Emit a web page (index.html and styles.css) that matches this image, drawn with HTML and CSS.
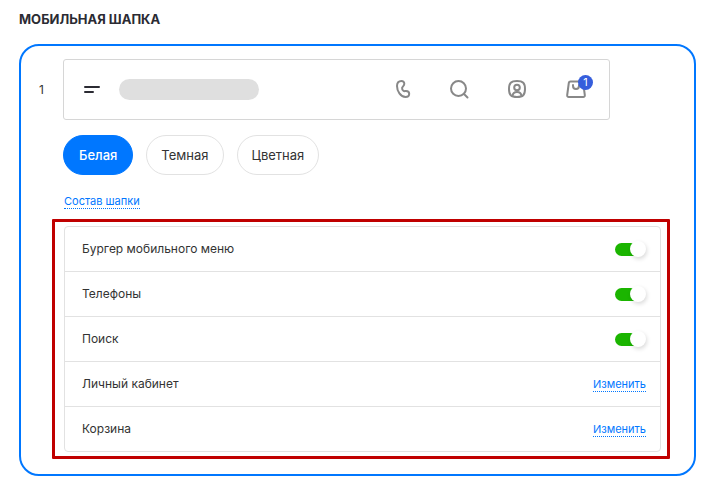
FILE: index.html
```html
<!doctype html>
<html lang="ru">
<head>
<meta charset="UTF-8" />
<title>Мобильная шапка</title>
<link rel="stylesheet" href="styles.css">
</head>
<body>
	<h1>МОБИЛЬНАЯ ШАПКА</h1>
	<div id="card">
		<div class="number">1</div>
		<div class="content">
			<div class="preview">
				<svg class="burger" width="16" height="8" viewBox="0 0 16 8"><path d="M1 1h14M1 6h8" fill="none" stroke="#2b2b33" stroke-width="2" stroke-linecap="round"/></svg>
				<div class="logo"></div>
				<div class="icons">
					<svg class="icon" viewBox="0 0 24 24"><path d="M11.500 3C8.500 3 7 5.300 7 8c0 5 3.600 11 8.500 11 2.300 0 3.700-1.400 3.700-3.200S17.800 13 16 13c-1.300 0-1.700.5-2.600-.2-.9-.7-1.400-2-1.300-3 .1-1.100 2.200-1.600 2.200-4C14.300 4.200 13.100 3 11.500 3z"/></svg>
					<svg class="icon" viewBox="0 0 24 24"><circle cx="10.500" cy="10.500" r="7.500"/><path d="M16 16l3.500 3.500"/></svg>
					<svg class="icon" viewBox="0 0 24 24"><path d="M11 3c-6 0-8 2-8 8s2 8 8 8 8-2 8-8-2-8-8-8z"/><circle cx="11" cy="9.500" r="2.800"/><path d="M6.500 18c.3-2.800 1.500-4 4.500-4s4.200 1.200 4.500 4"/></svg>
					<div class="basket">
						<svg class="icon" viewBox="0 0 24 24"><path d="M6.500 3.500h11q1.500 0 1.700 1.500l1.600 12q.2 2-1.600 2H4.800q-1.800 0-1.600-2L4.800 5Q5 3.500 6.500 3.500z"/><path d="M9 7v.7c0 4.400 6 4.400 6 0V7"/></svg>
						<span class="count">1</span>
					</div>
				</div>
			</div>
			<div class="colors">
				<button type="button" class="active">Белая</button>
				<button type="button">Темная</button>
				<button type="button">Цветная</button>
			</div>
			<a href="#" class="link">Состав шапки</a>
			<div class="frame">
				<ul class="options">
					<li><label for="burger">Бургер мобильного меню</label><input type="checkbox" id="burger" class="switch" checked /></li>
					<li><label for="phones">Телефоны</label><input type="checkbox" id="phones" class="switch" checked /></li>
					<li><label for="search">Поиск</label><input type="checkbox" id="search" class="switch" checked /></li>
					<li><span>Личный кабинет</span><a href="#" class="link">Изменить</a></li>
					<li><span>Корзина</span><a href="#" class="link">Изменить</a></li>
				</ul>
			</div>
		</div>
	</div>
</body>
</html>
```
FILE: styles.css
```css
*{
	box-sizing:border-box;
}
html, body, h1, ul, li, button, input{
	margin:0;
	padding:0;
}
body{
	padding:11px 13px 12px 19px;
	font:12px/16px Inter, "Liberation Sans", sans-serif;
	color:#333;
	background:#fff;
}
h1{
	font-size:13px;
	line-height:16px;
	font-weight:bold;
	color:#2b2b33;
}
#card{
	display:flex;
	margin-top:17px;
	padding:13px 24px 15px 18px;
	border:2px solid #0077ff;
	border-radius:20px;
}
.number{
	flex:none;
	width:24px;
	padding-top:23px;
}
.content{
	flex:1;
}
.preview{
	display:flex;
	align-items:center;
	height:61px;
	margin-right:60px;
	padding:0 21px 0 20px;
	border:1px solid #d6d6d6;
	border-radius:3px;
}
.logo{
	width:140px;
	height:21px;
	margin-left:19px;
	border-radius:11px;
	background:#dfdfdf;
}
.icons{
	display:flex;
	gap:34px;
	margin-left:auto;
}
.icon{
	display:block;
	width:24px;
	height:24px;
	fill:none;
	stroke:#888;
	stroke-width:2;
	stroke-linecap:round;
	stroke-linejoin:round;
}
.basket{
	position:relative;
}
.count{
	position:absolute;
	top:-3px;
	right:-5px;
	width:15px;
	border-radius:8px;
	background:#365edc;
	color:#fff;
	font-size:11px;
	line-height:15px;
	text-align:center;
}
.colors{
	display:flex;
	gap:13px;
	margin:15px 0 19px;
}
.colors button{
	height:40px;
	padding:0 14px;
	border:1px solid #e2e2e2;
	border-radius:20px;
	background:#fff;
	color:#333;
	font-family:inherit;
	font-size:13px;
	cursor:pointer;
}
.colors .active{
	padding:0 15px;
	border-color:#0077ff;
	background:#0077ff;
	color:#fff;
	font-weight:500;
}
.link{
	display:inline-block;
	border-bottom:1px dotted #0077ff;
	color:#0077ff;
	font-size:11px;
	line-height:14px;
	text-decoration:none;
}
.content > .link{
	display:block;
	width:max-content;
	margin-left:1px;
}
.frame{
	margin:10px 0 0 -11px;
	padding:4px 6px 4px 9px;
	border:3px solid #c00000;
	border-radius:1px;
}
.options{
	list-style:none;
	border:1px solid #e2e2e2;
	border-radius:4px;
}
.options li{
	display:flex;
	align-items:center;
	justify-content:space-between;
	height:45px;
	padding:0 14px 0 17px;
	border-bottom:1px solid #e2e2e2;
}
.options li:last-child{
	height:44px;
	border-bottom:0;
}
.switch{
	appearance:none;
	display:flex;
	align-items:center;
	width:31px;
	height:13px;
	border-radius:7px;
	background:#ccc;
	cursor:pointer;
}
.switch:before{
	content:"";
	width:16px;
	height:16px;
	flex:none;
	border-radius:50%;
	background:#fff;
	box-shadow:1px 2px 4px rgba(0,0,0,.15);
}
.switch:checked{
	justify-content:flex-end;
	background:linear-gradient(to right, #1bb500 24px, transparent 24px);
}
```
